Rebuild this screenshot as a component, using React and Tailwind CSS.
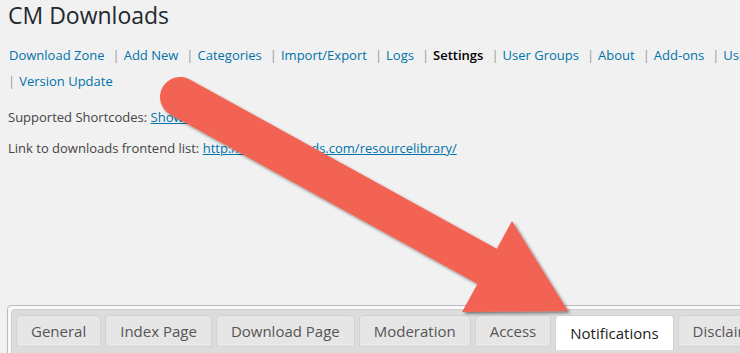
const NAV_ROW_1 = [
  "Download Zone",
  "Add New",
  "Categories",
  "Import/Export",
  "Logs",
  "Settings",
  "User Groups",
  "About",
  "Add-ons",
  "User Guide",
];

const TABS_ROW_1 = ["General", "Index Page", "Download Page", "Moderation", "Access", "Notifications", "Disclaimer", "Labels"];
const TABS_ROW_2 = [
  { label: "Labels", w: "w-[84px]" },
  { label: "Custom CSS", w: "w-[94px]" },
  { label: "Integrations", w: "w-[117px]" },
  { label: "Appearance Options", w: "w-[138px]" },
  { label: "Server Information", w: "w-[167px]" },
  { label: "Upgrade", w: "w-[120px]" },
];

function Sep({ lead = true }) {
  return <span className={`${lead ? "ml-[8px]" : ""} mr-[4px] text-[#999]`}>|</span>;
}

function NavLink({ children, current }) {
  if (current) return <span className="font-semibold text-black">{children}</span>;
  return <a className="text-[#0073aa]">{children}</a>;
}

function Tab({ label, active, className = "" }) {
  return (
    <div
      className={`flex shrink-0 items-center whitespace-nowrap rounded-t-[4px] border px-[14px] text-[15px] ${
        active
          ? "h-[35px] border-[#d3d3d3] border-b-0 bg-white text-[#212121]"
          : "h-[32px] border-[#d3d3d3] bg-[#e6e6e6] text-[#555]"
      } ${className}`}
    >
      {label}
    </div>
  );
}

function Arrow() {
  return (
    <svg className="pointer-events-none absolute left-0 top-0" width="740" height="353" viewBox="0 0 740 353">
      <defs>
        <filter id="arrowShadow" x="-10%" y="-10%" width="120%" height="120%">
          <feDropShadow dx="2" dy="2" stdDeviation="1.4" floodColor="#000" floodOpacity="0.45" />
        </filter>
      </defs>
      <g filter="url(#arrowShadow)" fill="#f26452" stroke="#f26452">
        <line x1="180" y1="97" x2="492" y2="269" strokeWidth="40" strokeLinecap="round" />
        <polygon points="512,221 568,311 462,312" strokeWidth="0" />
      </g>
    </svg>
  );
}

export default function App() {
  return (
    <div className="relative h-[353px] w-[740px] overflow-hidden bg-[#f1f1f1] font-['Open_Sans',sans-serif] text-[13px] text-[#444]">
      <div className="w-[1000px] pl-[8px]">
        <h1 className="pt-[1px] text-[23px] leading-[29px] text-[#23282d]">CM Downloads</h1>

        <div className="mt-[12px] leading-[26px]">
          <div className="whitespace-nowrap pl-[1px]">
            {NAV_ROW_1.map((item, i) => (
              <span key={item}>
                {i > 0 && <Sep />}
                <NavLink current={item === "Settings"}>{item}</NavLink>
              </span>
            ))}
          </div>
          <div className="whitespace-nowrap">
            <Sep lead={false} />
            <NavLink>Version Update</NavLink>
          </div>
        </div>

        <p className="mt-[13px] leading-[20px]">
          Supported Shortcodes: <a className="text-[#0073aa] underline">Show shortcodes</a>
        </p>
        <p className="mt-[11px] leading-[20px]">
          Link to downloads frontend list:{" "}
          <a className="text-[#0073aa] underline">http://cmdownloads.com/resourcelibrary/</a>
        </p>
      </div>

      <div className="ml-[7px] mt-[147px] w-[980px] rounded-tl-[4px] border border-[#bbb] bg-[#f9f9f9] p-[3px]">
        <div className="rounded-[4px] border border-[#cfcfcf] bg-[#dcdcdc] pl-[4px] pt-[5px]">
          <div className="flex items-start gap-x-[4px]">
            {TABS_ROW_1.map((t) => (
              <Tab key={t} label={t} active={t === "Notifications"} />
            ))}
          </div>
          <div className="flex items-start gap-x-[5px] pt-[3px]">
            {TABS_ROW_2.map((t) => (
              <Tab key={t.label} label={t.label} className={`${t.w} justify-center`} />
            ))}
          </div>
        </div>
      </div>

      <Arrow />
    </div>
  );
}
